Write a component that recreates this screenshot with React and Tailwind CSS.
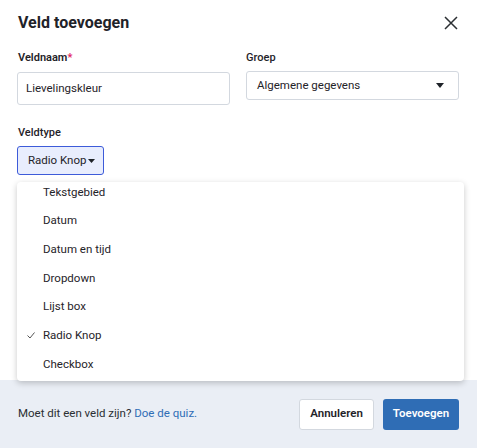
import React from "react";

export default function App() {
  const items = ["Tekstgebied", "Datum", "Datum en tijd", "Dropdown", "Lijst box", "Radio Knop", "Checkbox"];
  return (
    <div className="relative w-[477px] h-[448px] bg-white overflow-hidden text-[#1f2329] font-['Roboto',sans-serif]">
      <div className="flex flex-col h-[380px] px-[17px]">
        <div className="flex items-center justify-between pt-[8px] h-[38px]">
          <h1 className="text-[16px] font-bold pl-[1px]">Veld toevoegen</h1>
          <button className="mr-[2px] text-[#2b2f33]">
            <svg width="14" height="14" viewBox="0 0 14 14" fill="none" stroke="currentColor" strokeWidth="1.5">
              <path d="M1 1 L13 13 M13 1 L1 13" />
            </svg>
          </button>
        </div>
        <div className="flex gap-[16px] mt-[10px]">
          <div className="flex flex-col w-[213px]">
            <label className="text-[11px] font-semibold h-[20px] leading-[20px] pl-[1px]">
              Veldnaam<span className="text-[#e0245e]">*</span>
            </label>
            <div className="mt-[4px] h-[33px] border border-[#d3d8df] rounded-[3px] flex items-center px-[8px] text-[11.5px]">
              Lievelingskleur
            </div>
          </div>
          <div className="flex flex-col w-[213px]">
            <label className="text-[11px] font-medium h-[20px] leading-[20px]">Groep</label>
            <div className="mt-[3px] h-[29px] border border-[#d3d8df] rounded-[3px] flex items-center justify-between pl-[10px] pr-[14px] text-[11.5px]">
              <span>Algemene gegevens</span>
              <svg width="8" height="5" viewBox="0 0 8 5"><path d="M0 0 H8 L4 5 Z" fill="#1f2329" /></svg>
            </div>
          </div>
        </div>
        <label className="mt-[18px] text-[11px] font-medium h-[20px] leading-[20px] pl-[1px]">Veldtype</label>
        <div className="mt-[3px]">
          <button className="h-[29px] w-[87px] pl-[10px] bg-[#e8edfd] border border-[#3d5bd9] rounded-[3px] flex items-center text-[11.5px]">
            Radio Knop
            <svg width="7" height="4" viewBox="0 0 7 4" className="ml-[1px]"><path d="M0 0 H7 L3.5 4 Z" fill="#1f2329" /></svg>
          </button>
        </div>
      </div>
      <div className="h-[68px] bg-[#eaeef5] flex items-center justify-between pl-[18px] pr-[18px]">
        <p className="text-[11.5px] text-[#2b2f33]">
          Moet dit een veld zijn? <a className="text-[#2f6db5]">Doe de quiz.</a>
        </p>
        <div className="flex gap-[9px]">
          <button className="h-[31px] w-[75px] bg-white border border-[#d3d8df] rounded-[3px] text-[11.5px] font-semibold">Annuleren</button>
          <button className="h-[31px] w-[76px] bg-[#2f6db5] text-white rounded-[3px] text-[11.5px] font-semibold">Toevoegen</button>
        </div>
      </div>
      <div className="absolute left-[17px] top-[182px] w-[447px] h-[199px] bg-white rounded-[4px] shadow-[0_2px_6px_rgba(0,0,0,0.22)] overflow-hidden">
        <ul className="-mt-[4px] flex flex-col">
          {items.map((it) => (
            <li key={it} className="h-[28.7px] flex items-center text-[11.5px] relative pl-[26px]">
              {it === "Radio Knop" && (
                <svg width="8" height="7" viewBox="0 0 8 7" className="absolute left-[10px] top-[11px]" fill="none" stroke="#555" strokeWidth="1">
                  <path d="M0.5 3.5 L3 6 L7.5 0.5" />
                </svg>
              )}
              {it}
            </li>
          ))}
        </ul>
      </div>
    </div>
  );
}
